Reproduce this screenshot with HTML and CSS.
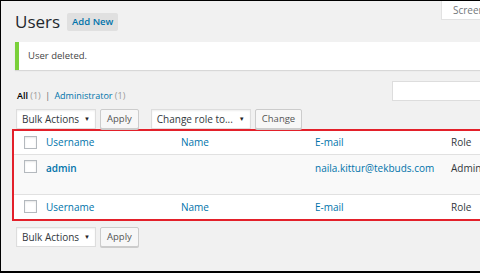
FILE: index.html
```html
<!DOCTYPE html>
<html lang="en">
<head>
    <meta charset="UTF-8">
    <title>Users</title>
    <link rel="stylesheet" href="styles.css">
</head>
<body>
    <div class="screen">
        <div class="screen-tab">Screen Options</div>
        <div class="page-head">
            <h1>Users</h1>
            <a href="#" class="add-new">Add New</a>
        </div>

        <div class="notice">User deleted.</div>

        <div class="filter-row">
            <div class="views">
                <b>All</b> <span class="count">(1)</span> <span class="sep">|</span>
                <a href="#">Administrator</a> <span class="count">(1)</span>
            </div>
            <div class="search"></div>
        </div>

        <div class="tablenav">
            <span class="select">Bulk Actions <i>&#9660;</i></span>
            <span class="button">Apply</span>
            <span class="select role">Change role to... <i>&#9660;</i></span>
            <span class="button">Change</span>
        </div>

        <div class="highlight">
            <table class="users">
                <colgroup>
                    <col class="c-cb"><col class="c-user"><col class="c-name"><col class="c-mail"><col>
                </colgroup>
                <thead>
                    <tr>
                        <th><span class="cb"></span></th>
                        <th><a href="#">Username</a></th>
                        <th><a href="#">Name</a></th>
                        <th><a href="#">E-mail</a></th>
                        <th>Role</th>
                    </tr>
                </thead>
                <tbody>
                    <tr class="alt">
                        <td><span class="cb"></span></td>
                        <td><a href="#" class="login">admin</a></td>
                        <td></td>
                        <td><a href="#">naila.kittur@tekbuds.com</a></td>
                        <td>Administrator</td>
                    </tr>
                </tbody>
                <tfoot>
                    <tr>
                        <th><span class="cb"></span></th>
                        <th><a href="#">Username</a></th>
                        <th><a href="#">Name</a></th>
                        <th><a href="#">E-mail</a></th>
                        <th>Role</th>
                    </tr>
                </tfoot>
            </table>
        </div>

        <div class="tablenav bottom">
            <span class="select">Bulk Actions <i>&#9660;</i></span>
            <span class="button">Apply</span>
        </div>
    </div>
</body>
</html>
```

FILE: styles.css
```css
html, body {
    margin: 0;
    padding: 0;
}
body {
    font-family: "Open Sans", "Liberation Sans", sans-serif;
    font-size: 10px;
    color: #444;
}
a {
    color: #0073aa;
    text-decoration: none;
}
.screen {
    position: relative;
    width: 480px;
    height: 273px;
    box-sizing: border-box;
    overflow: hidden;
    background: #f1f1f1;
    border-top: 1px solid #000;
    border-left: 1px solid #000;
    border-bottom: 2px solid #000;
    padding-left: 14px;
}
.screen-tab {
    position: absolute;
    top: 0;
    left: 440px;
    width: 90px;
    height: 18px;
    background: #fff;
    border: 1px solid #e2e2e2;
    border-top: none;
    color: #72777c;
    font-size: 10px;
    line-height: 18px;
    padding-left: 11px;
    white-space: nowrap;
}
.page-head {
    display: flex;
    align-items: center;
    gap: 7px;
    margin-top: 9px;
    height: 24px;
}
.page-head h1 {
    margin: 0;
    font-size: 17px;
    font-weight: 400;
    color: #23282d;
    line-height: 24px;
}
.add-new {
    background: #e0e0e0;
    padding: 0 5px;
    height: 18px;
    line-height: 18px;
    font-size: 9.5px;
    font-weight: 600;
    border-radius: 2px;
}
.notice {
    margin-top: 8px;
    height: 28px;
    line-height: 28px;
    width: 520px;
    background: #fff;
    border-left: 4px solid #7ad03a;
    box-shadow: 0 1px 1px rgba(0, 0, 0, 0.1);
    padding-left: 9px;
    font-size: 9.5px;
    color: #444;
}
.filter-row {
    display: flex;
    align-items: flex-end;
    margin-top: 11px;
    height: 22px;
}
.views {
    font-size: 9px;
    color: #555;
    padding-left: 2px;
    line-height: 14px;
}
.views b {
    color: #000;
    font-weight: 600;
}
.count {
    color: #999;
}
.sep {
    color: #666;
    margin: 0 2px;
}
.search {
    margin-left: auto;
    margin-right: -40px;
    margin-bottom: 2px;
    width: 126px;
    height: 18px;
    background: #fff;
    border: 1px solid #ddd;
}
.tablenav {
    display: flex;
    align-items: center;
    gap: 4px;
    margin-top: 5px;
    height: 21px;
    padding-left: 1px;
}
.tablenav.bottom {
    margin-top: 5px;
}
.select {
    display: flex;
    align-items: center;
    justify-content: space-between;
    box-sizing: border-box;
    width: 80px;
    height: 20px;
    background: #fff;
    border: 1px solid #ddd;
    box-shadow: inset 0 1px 2px rgba(0, 0, 0, 0.07);
    padding: 0 5px;
    color: #32373c;
    font-size: 10px;
    white-space: nowrap;
}
.select i {
    font-style: normal;
    font-size: 6px;
    color: #222;
}
.select.role {
    width: 100px;
    margin-left: 8px;
}
.button {
    box-sizing: border-box;
    height: 20px;
    line-height: 18px;
    padding: 0 6px;
    background: #f7f7f7;
    border: 1px solid #ccc;
    border-radius: 2px;
    box-shadow: 0 1px 0 #ccc;
    color: #555;
    font-size: 9.5px;
}
.highlight {
    margin-left: -3px;
    width: 600px;
    border: 2px solid #e3202a;
    background: #fff;
}
.users {
    width: 100%;
    border-collapse: collapse;
    table-layout: fixed;
}
.c-cb { width: 24px; }
.c-user { width: 135px; }
.c-name { width: 134px; }
.c-mail { width: 136px; }
.users th, .users td {
    text-align: left;
    font-weight: 400;
    padding: 0 0 0 8px;
    font-size: 10px;
    color: #32373c;
    white-space: nowrap;
    overflow: hidden;
}
.users th:first-child, .users td:first-child {
    padding-left: 10px;
}
.users thead tr {
    height: 23px;
    border-bottom: 1px solid #e1e1e1;
}
.users tfoot tr {
    height: 25px;
    border-top: 1px solid #e1e1e1;
}
.users tbody tr {
    height: 40px;
    background: #f9f9f9;
}
.users tbody td {
    vertical-align: top;
    padding-top: 6px;
}
.users tbody td:first-child {
    padding-top: 5px;
}
.cb {
    display: block;
    width: 11px;
    height: 11px;
    border: 1px solid #b4b9be;
    background: #fff;
    box-shadow: inset 0 1px 2px rgba(0, 0, 0, 0.1);
}
.login {
    font-weight: 600;
}
```
